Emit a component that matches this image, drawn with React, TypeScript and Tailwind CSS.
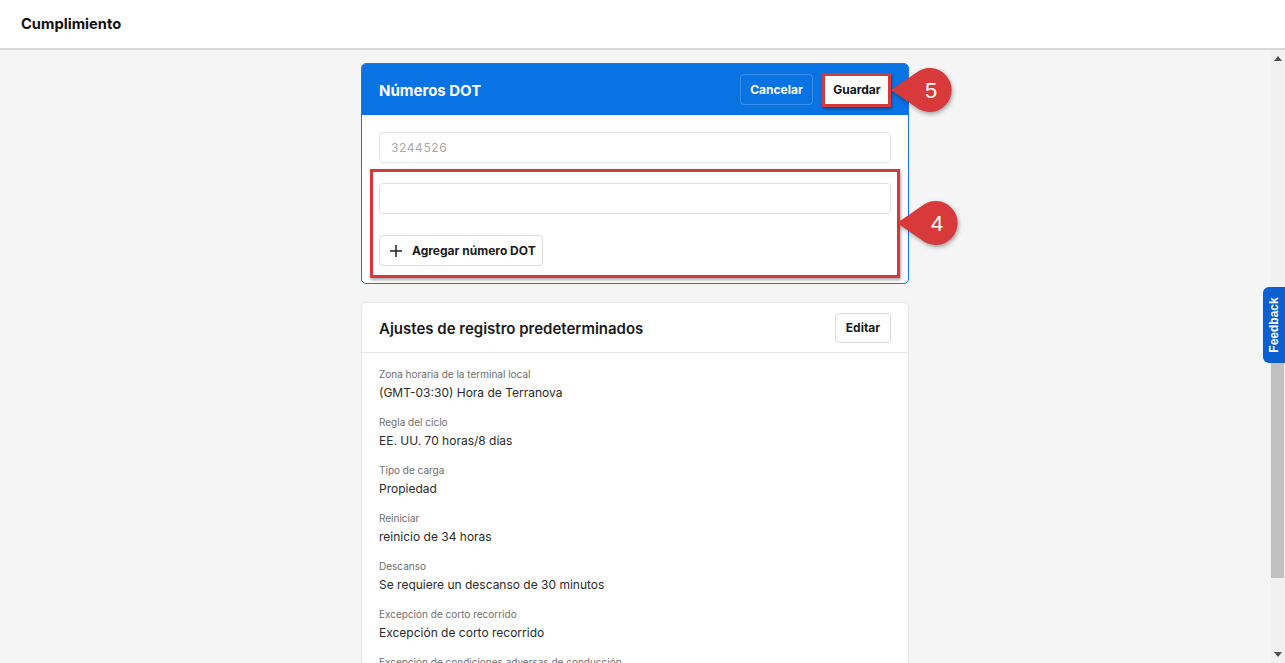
import React from 'react';

const settings = [
  { label: 'Zona horaria de la terminal local', value: '(GMT-03:30) Hora de Terranova' },
  { label: 'Regla del ciclo', value: 'EE. UU. 70 horas/8 días' },
  { label: 'Tipo de carga', value: 'Propiedad' },
  { label: 'Reiniciar', value: 'reinicio de 34 horas' },
  { label: 'Descanso', value: 'Se requiere un descanso de 30 minutos' },
  { label: 'Excepción de corto recorrido', value: 'Excepción de corto recorrido' },
  { label: 'Excepción de condiciones adversas de conducción', value: 'Deshabilitado' },
];

// Red teardrop step marker pointing left
function Callout({ n }: { n: string }) {
  return (
    <div className="relative w-[68px] h-[50px]">
      <svg width="68" height="50" viewBox="0 0 68 50" className="absolute inset-0" style={{ filter: 'drop-shadow(1px 2px 2px rgba(0,0,0,0.35))' }}>
        <path d="M2 25 L26.4 8.2 A22 22 0 1 1 26.4 41.8 Z" fill="#d8393b" />
      </svg>
      <span className="absolute left-[20px] top-0 w-[44px] h-[50px] flex items-center justify-center text-white text-[22px] font-['Liberation_Sans',Arial,sans-serif]">
        {n}
      </span>
    </div>
  );
}

export default function App() {
  return (
    <div className="h-screen flex flex-col bg-[#f5f5f5] font-['Inter',sans-serif] overflow-hidden">
      <header className="h-[50px] shrink-0 bg-white border-b-2 border-[#d8d8d8] flex items-center px-[21px]">
        <h1 className="text-[14.7px] font-bold text-[#111]">Cumplimiento</h1>
      </header>

      <div className="flex-1 flex min-h-0 relative">
        <main className="flex-1 overflow-hidden pt-[13px]">
          <div className="w-[548px] mx-auto">
            {/* Números DOT */}
            <div className="relative border border-[#1677e8] rounded-[5px] bg-white">
              <div className="h-[51px] bg-[#0a73e4] rounded-t-[4px] flex items-center justify-between pl-[17px] pr-[17px]">
                <h2 className="mt-[3px] text-[15px] font-bold text-white">Números DOT</h2>
                <div className="flex items-center gap-[10px]">
                  <button className="h-[31px] w-[73px] rounded-[4px] border border-white/20 text-white text-[12px] font-bold">
                    Cancelar
                  </button>
                  <button className="h-[31px] w-[68px] rounded-[3px] bg-white text-[#111] text-[12px] font-bold">
                    Guardar
                  </button>
                </div>
              </div>
              <div className="px-[17px] pt-[17px] pb-[17px]">
                <div className="h-[31px] rounded-[4px] border border-[#e4e4e4] flex items-center px-[11px] text-[12px] text-[#a9a9a9] tracking-[0.6px]">
                  3244526
                </div>
                <div className="h-[31px] mt-[20px] rounded-[4px] border border-[#e0e0e0] bg-white" />
                <button className="mt-[21px] h-[31px] w-[164px] rounded-[4px] border border-[#dcdcdc] flex items-center pl-[9px] gap-[9px] text-[12px] font-bold text-[#1a1a1a] whitespace-nowrap">
                  <svg width="14" height="14" viewBox="0 0 14 14" fill="none" stroke="#222" strokeWidth="1.5">
                    <path d="M7 1v12M1 7h12" />
                  </svg>
                  Agregar número DOT
                </button>
              </div>

              {/* annotation overlays */}
              <div className="absolute left-[460px] top-[9px] w-[69px] h-[34px] border-[3px] border-[#d6393b] shadow-[1px_2px_3px_rgba(0,0,0,0.35)]" />
              <div className="absolute left-[527px] top-[1px]">
                <Callout n="5" />
              </div>
              <div className="absolute left-[8px] top-[105px] w-[530px] h-[109px] border-[3px] border-[#d6393b] shadow-[1px_2px_3px_rgba(0,0,0,0.35)]" />
              <div className="absolute left-[533px] top-[134px]">
                <Callout n="4" />
              </div>
            </div>

            {/* Ajustes de registro */}
            <div className="mt-[18px] border border-[#e6e6e6] rounded-[5px] bg-white">
              <div className="h-[50px] border-b border-[#e8e8e8] flex items-center justify-between px-[17px]">
                <h2 className="mt-[3px] text-[15px] font-semibold text-[#1a1a1a]">Ajustes de registro predeterminados</h2>
                <button className="h-[30px] w-[56px] rounded-[4px] border border-[#d9d9d9] text-[12px] font-bold text-[#1a1a1a]">
                  Editar
                </button>
              </div>
              <div className="px-[17px] pt-[13px]">
                {settings.map((s) => (
                  <div key={s.label} className="mb-[11px]">
                    <div className="text-[10px] leading-[16px] text-[#6e6e6e]">{s.label}</div>
                    <div className="mt-[1px] text-[12px] leading-[20px] text-[#2a2a2a]">{s.value}</div>
                  </div>
                ))}
              </div>
            </div>
          </div>
        </main>

        {/* scrollbar */}
        <div className="w-[15px] shrink-0 bg-[#f1f1f1] flex flex-col items-center">
          <div className="h-[17px] flex items-center justify-center">
            <svg width="8" height="5" viewBox="0 0 8 5"><path d="M0 5L4 0L8 5Z" fill="#505050" /></svg>
          </div>
          <div className="mt-[296px] h-[215px] w-[13px] bg-[#c1c1c1]" />
          <div className="flex-1" />
          <div className="h-[17px] flex items-center justify-center">
            <svg width="8" height="5" viewBox="0 0 8 5"><path d="M0 0L8 0L4 5Z" fill="#505050" /></svg>
          </div>
        </div>

        {/* feedback tab */}
        <div className="absolute right-0 top-[237px] w-[22px] h-[76px] bg-[#0b5fd0] rounded-l-[6px] flex items-center justify-center">
          <span className="-rotate-90 text-white text-[12px] font-bold whitespace-nowrap font-['Liberation_Sans',Arial,sans-serif]">Feedback</span>
        </div>
      </div>
    </div>
  );
}
